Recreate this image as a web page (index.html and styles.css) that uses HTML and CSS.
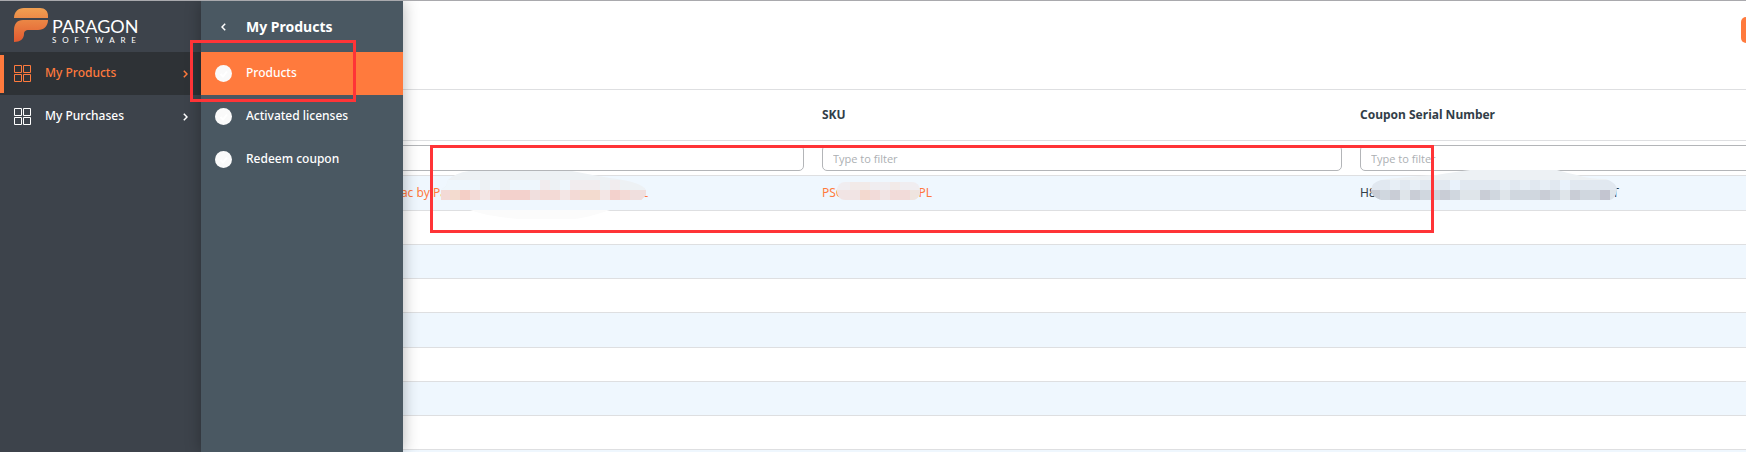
FILE: index.html
```html
<!DOCTYPE html>
<html lang="en">
<head>
<meta charset="utf-8">
<title>My Products</title>
<link rel="stylesheet" href="styles.css">
</head>
<body>
<div class="app">
  <aside class="sidebar">
    <a class="brand" href="#" aria-label="Paragon Software">
      <svg class="brand-mark" viewBox="0 0 34 35" aria-hidden="true">
        <defs>
          <linearGradient id="flame" x1="0" y1="0" x2="0" y2="34" gradientUnits="userSpaceOnUse">
            <stop offset="0" stop-color="#f0a052"/>
            <stop offset="1" stop-color="#e2592f"/>
          </linearGradient>
        </defs>
        <path fill="url(#flame)" d="M0 10C0 4 4 0 10 0H26C31 0 34 3 34 8V10H0Z"/>
        <path fill="url(#flame)" d="M0 22C0 16 3 12 9 12H34C34 18 30 22 24 22H15C11 22 10 24 10 26C10 31 6 34 0 34Z"/>
      </svg>
      <span class="brand-text">
        <span class="brand-name">PARAGON</span>
        <span class="brand-sub"><i>S</i><i>O</i><i>F</i><i>T</i><i>W</i><i>A</i><i>R</i><i>E</i></span>
      </span>
    </a>
    <nav class="nav">
      <a class="nav-item active" href="#">
        <svg class="icon" viewBox="0 0 17 17" aria-hidden="true"><path d="M.5.5h7v7h-7zM9.500.5h7v7h-7zM.5 9.500h7v7h-7zM9.500 9.500h7v7h-7z"/></svg>
        <span class="nav-label">My Products</span>
        <svg class="chevron" viewBox="0 0 5 8" aria-hidden="true"><path d="M.8.8 4 4 .8 7.200"/></svg>
      </a>
      <a class="nav-item" href="#">
        <svg class="icon" viewBox="0 0 17 17" aria-hidden="true"><path d="M.5.5h7v7h-7zM9.500.5h7v7h-7zM.5 9.500h7v7h-7zM9.500 9.500h7v7h-7z"/></svg>
        <span class="nav-label">My Purchases</span>
        <svg class="chevron" viewBox="0 0 5 8" aria-hidden="true"><path d="M.8.8 4 4 .8 7.200"/></svg>
      </a>
    </nav>
  </aside>

  <nav class="submenu" aria-label="My Products">
    <button class="submenu-title" type="button">
      <svg class="chevron" viewBox="0 0 5 8" aria-hidden="true"><path d="M4.200.8 1 4l3.200 3.200"/></svg>
      <span>My Products</span>
    </button>
    <a class="sub-item active" href="#"><svg class="dot" viewBox="0 0 17 17" aria-hidden="true"><circle cx="8.500" cy="8.500" r="8.500"/><path d="m5.500 9 2.500 2.500 4-5"/></svg><span class="label">Products</span></a>
    <a class="sub-item" href="#"><svg class="dot" viewBox="0 0 17 17" aria-hidden="true"><circle cx="8.500" cy="8.500" r="8.500"/><path d="m5.500 9 2.500 2.500 4-5"/></svg><span class="label">Activated licenses</span></a>
    <a class="sub-item" href="#"><svg class="dot" viewBox="0 0 17 17" aria-hidden="true"><circle cx="8.500" cy="8.500" r="8.500"/><path d="m5.500 9 2.500 2.500 4-5"/></svg><span class="label">Redeem coupon</span></a>
  </nav>

  <main class="content">
    <header class="toolbar"><button class="action" type="button" aria-label="Action"></button></header>
    <table class="grid">
      <colgroup><col class="col-select"><col><col><col></colgroup>
      <thead>
        <tr class="head"><th></th><th></th><th>SKU</th><th>Coupon Serial Number</th></tr>
        <tr class="filters">
          <td></td>
          <td><input type="text" aria-label="Filter by name"></td>
          <td><input type="text" placeholder="Type to filter" aria-label="Filter by SKU"></td>
          <td><input type="text" placeholder="Type to filter" aria-label="Filter by coupon serial number"></td>
        </tr>
      </thead>
      <tbody>
        <tr><td></td>
          <td><a class="cell name" href="#"><span>Mac by Pa</span><span>L</span></a></td>
          <td><a class="cell sku" href="#"><span>PSG</span><span>PL</span></a></td>
          <td><span class="cell serial"><span>H8</span><span>T</span></span></td></tr>
        <tr><td></td><td></td><td></td><td></td></tr>
        <tr><td></td><td></td><td></td><td></td></tr>
        <tr><td></td><td></td><td></td><td></td></tr>
        <tr class="tall"><td></td><td></td><td></td><td></td></tr>
        <tr><td></td><td></td><td></td><td></td></tr>
        <tr><td></td><td></td><td></td><td></td></tr>
        <tr><td></td><td></td><td></td><td></td></tr>
        <tr><td></td><td></td><td></td><td></td></tr>
      </tbody>
    </table>
  </main>

  <svg class="markup" width="1746" height="452" viewBox="0 0 1746 452" aria-hidden="true">
    <defs>
      <clipPath id="smudge-name"><path d="M448 180Q455 173 469 171H572Q592 175 610 178Q642 182 646 190V195L641 200H441V190L446 186Z"/></clipPath>
      <clipPath id="smudge-sku"><rect x="837" y="182" width="83" height="18" rx="8"/></clipPath>
      <clipPath id="smudge-serial"><path d="M1381 180Q1400 177 1436 175Q1455 172 1470 170H1557Q1567 173 1577 175Q1588 179 1606 179Q1617 183 1617 190Q1616 198 1610 200H1381Q1371 196 1371 190Q1372 182 1381 180Z"/></clipPath>
    </defs>
    <g clip-path="url(#smudge-name)">
      <path fill="#edf1f4" d="M440 170h210v20H440z"/>
      <path fill="#eef6fc" d="M440 180h40v10h-40zM490 180h10v10h-10zM510 180h30v10h-30zM560 180h10v10h-10z"/>
      <path fill="#f1ecee" d="M540 180h10v10h-10zM570 180h30v10h-30zM610 180h10v10h-10z"/>
      <path fill="#f3dad6" d="M440 190h210v10H440z"/>
      <path fill="#f3dbcf" d="M450 190h10v10h-10zM580 190h20v10h-20z"/>
      <path fill="#f4cfc6" d="M460 190h10v10h-10z"/>
      <path fill="#f3e6e5" d="M480 190h10v10h-10zM560 190h10v10h-10zM600 190h10v10h-10z"/>
      <path fill="#f3d1cc" d="M500 190h30v10h-30zM610 190h10v10h-10z"/>
      <path fill="#f0dfde" d="M530 190h10v10h-10zM630 190h20v10h-20z"/>
    </g>
    <path fill="#fbfbfb" d="M470 210H610Q590 217 575 219H518Q485 216 470 210Z"/>
    <g clip-path="url(#smudge-sku)">
      <path fill="#f0edf0" d="M830 180h100v10H830z"/>
      <path fill="#f2eae8" d="M850 180h20v10h-20zM890 180h10v10h-10z"/>
      <path fill="#f1e4e4" d="M830 190h100v10H830z"/>
      <path fill="#f3d9cf" d="M860 190h10v10h-10z"/>
      <path fill="#f2dbd9" d="M870 190h10v10h-10zM890 190h20v10h-20z"/>
      <path fill="#efe4df" d="M910 190h10v10h-10z"/>
    </g>
    <g clip-path="url(#smudge-serial)">
      <path fill="#edf1f4" d="M1370 170h250v10h-250z"/>
      <path fill="#e1e8f0" d="M1370 180h250v10h-250z"/>
      <path fill="#e7eef5" d="M1390 180h10v10h-10zM1410 180h10v10h-10zM1500 180h10v10h-10zM1520 180h10v10h-10zM1540 180h10v10h-10z"/>
      <path fill="#e9f2fb" d="M1450 180h10v10h-10zM1560 180h10v10h-10z"/>
      <path fill="#d0d7df" d="M1370 190h240v10h-240z"/>
      <path fill="#c9cdd6" d="M1370 190h10v10h-10zM1390 190h10v10h-10zM1410 190h10v10h-10zM1440 190h10v10h-10zM1480 190h10v10h-10zM1540 190h10v10h-10zM1570 190h10v10h-10z"/>
      <path fill="#dfe5ea" d="M1400 190h10v10h-10zM1460 190h20v10h-20zM1500 190h10v10h-10zM1560 190h10v10h-10zM1610 190h10v10h-10z"/>
      <path fill="#c3c5d0" d="M1600 190h10v10h-10z"/>
    </g>
    <g fill="none" stroke="#ff3437" stroke-width="3">
      <path d="M191.500 41.500h163v59h-163z"/>
      <path d="M431.500 146.500h1001v85h-1001z"/>
    </g>
  </svg>
</div>
</body>
</html>
```
FILE: styles.css
```css
* { box-sizing: border-box; }

body {
  margin: 0;
  font: 12px/20px "Noto Sans", "Open Sans", sans-serif;
  color: #323e48;
  background: #fff;
}

a { color: inherit; text-decoration: none; }
button { font: inherit; color: inherit; border: 0; }

.app {
  position: relative;
  display: flex;
  height: 100vh;
  overflow: hidden;
  border-top: 1px solid #a9a9ad;
}

.sidebar {
  flex: 0 0 201px;
  color: #fff;
  background: #3d434b;
}

.brand {
  display: flex;
  gap: 4px;
  height: 51px;
  padding: 7px 0 0 14px;
}
.brand-mark { width: 34px; height: 35px; }
.brand-text { display: flex; flex-direction: column; width: 84px; padding-top: 8px; }
.brand-name { font: 18px/20px Lato, sans-serif; }
.brand-sub {
  display: flex;
  justify-content: space-between;
  font: 8px/8px Lato, sans-serif;
}
.brand-sub i { font-style: normal; }

.nav-item, .sub-item {
  display: flex;
  align-items: center;
  height: 43px;
  font-weight: 500;
}
.nav-item { padding: 0 13px 0 14px; }
.nav-item.active {
  color: #ff7a3d;
  background: linear-gradient(#ff7a3d, #ff7a3d) 0 3px / 4px 38px no-repeat #2e3236;
}
.icon { width: 17px; height: 17px; margin-right: 14px; fill: none; stroke: currentColor; }
.nav-label, .label { padding-bottom: 2px; }
.nav-label { flex: 1; }
.chevron { width: 5px; height: 8px; fill: none; stroke: currentColor; stroke-width: 1.5; }

.submenu {
  position: absolute;
  top: 0;
  bottom: 0;
  left: 201px;
  width: 202px;
  color: #fff;
  background: #4a5862;
  box-shadow: 0 0 15px rgba(0, 0, 0, .3);
}
.submenu-title {
  display: flex;
  align-items: center;
  gap: 20px;
  width: 100%;
  height: 51px;
  padding: 0 20px;
  font-size: 14px;
  font-weight: 700;
  background: none;
}
.sub-item { gap: 14px; padding: 0 14px; }
.sub-item.active { background: #ff7a3d; }
.dot { width: 17px; height: 17px; }
.dot circle { fill: #fafafa; }
.dot path { fill: none; stroke: #fff; stroke-width: 2; }

.content { flex: 1; min-width: 0; overflow: hidden; }

.toolbar {
  display: flex;
  justify-content: flex-end;
  height: 88px;
  padding-top: 16px;
}
.action {
  width: 5px;
  height: 26px;
  padding: 0;
  border-radius: 5px 0 0 5px;
  background: #ff7a3d;
}

.grid {
  width: 100%;
  min-width: 1688px;
  table-layout: fixed;
  border-collapse: separate;
  border-spacing: 0;
  border-top: 1px solid #dedfe1;
}
.col-select { width: 74px; }
.grid th, .grid td {
  height: 34px;
  padding: 0 9px;
  text-align: left;
  border-bottom: 1px solid #dedfe1;
}
.grid .head th { height: 51px; }
.grid .filters td { height: 35px; }
.grid input {
  display: block;
  width: 100%;
  height: 26px;
  padding: 0 10px;
  font: 11px/20px "Open Sans", "Noto Sans", sans-serif;
  border: 1px solid #b3b5b8;
  border-radius: 5px;
  background: #fff;
}
.grid input::placeholder { color: #acafb3; opacity: 1; }
.grid tbody tr:nth-child(odd) td { background: #eff7fe; }
.grid tbody tr:first-child td, .grid tbody .tall td { height: 35px; }

.cell { display: flex; justify-content: space-between; }
.grid a.cell { color: #ff7a3d; }
.name { width: 258px; margin-left: 106px; }
.sku { width: 110px; }
.serial { width: 259px; }

.markup { position: absolute; top: -1px; left: 0; pointer-events: none; }
```
